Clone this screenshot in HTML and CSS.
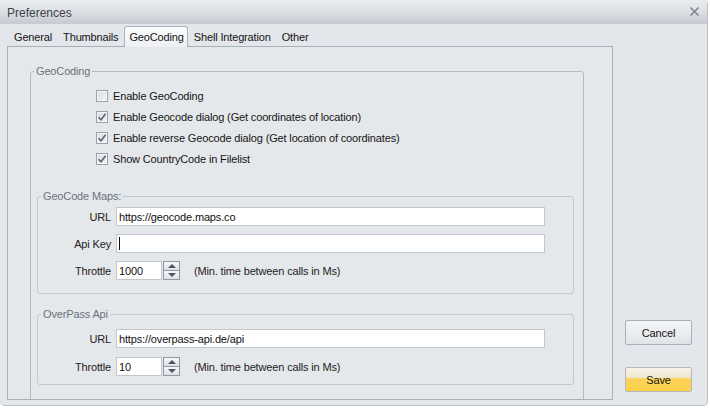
FILE: index.html
```html
<!DOCTYPE html>
<html>
<head>
<meta charset="utf-8">
<title>Preferences</title>
<link rel="stylesheet" href="styles.css">
</head>
<body>
<div class="window">
  <div class="titlebar">
    <span class="title">Preferences</span>
    <svg class="close" width="9" height="9" viewBox="0 0 9 9"><path d="M1 1 L8 8 M8 1 L1 8" stroke="#7c838d" stroke-width="1.5" stroke-linecap="square"/></svg>
  </div>
  <div class="main">
    <div class="tabctl">
      <div class="tabs">
        <span class="tab">General</span>
        <span class="tab">Thumbnails</span>
        <span class="tab active">GeoCoding</span>
        <span class="tab">Shell Integration</span>
        <span class="tab">Other</span>
      </div>
      <div class="panel">
        <fieldset class="group outer">
          <legend>GeoCoding</legend>
          <div class="checks">
            <div class="check"><span class="box"></span><span>Enable GeoCoding</span></div>
            <div class="check"><span class="box on"><svg width="10" height="10" viewBox="0 0 10 10"><path d="M1.5 5.2 L4 7.8 L8.6 1.8" fill="none" stroke="#5d6673" stroke-width="1.6"/></svg></span><span>Enable Geocode dialog (Get coordinates of location)</span></div>
            <div class="check"><span class="box on"><svg width="10" height="10" viewBox="0 0 10 10"><path d="M1.5 5.2 L4 7.8 L8.6 1.8" fill="none" stroke="#5d6673" stroke-width="1.6"/></svg></span><span>Enable reverse Geocode dialog (Get location of coordinates)</span></div>
            <div class="check"><span class="box on"><svg width="10" height="10" viewBox="0 0 10 10"><path d="M1.5 5.2 L4 7.8 L8.6 1.8" fill="none" stroke="#5d6673" stroke-width="1.6"/></svg></span><span>Show CountryCode in Filelist</span></div>
          </div>
          <fieldset class="group sub maps">
            <legend>GeoCode Maps:</legend>
            <div class="form">
              <span class="lbl">URL</span>
              <div class="input">https://geocode.maps.co</div>
              <span class="lbl">Api Key</span>
              <div class="input"><span class="caret"></span></div>
              <span class="lbl">Throttle</span>
              <div class="spinrow">
                <div class="input num">1000</div>
                <div class="spin"><span class="sbtn"><span class="arrow up"></span></span><span class="sbtn"><span class="arrow down"></span></span></div>
                <span class="hint">(Min. time between calls in Ms)</span>
              </div>
            </div>
          </fieldset>
          <fieldset class="group sub overpass">
            <legend>OverPass Api</legend>
            <div class="form loose">
              <span class="lbl">URL</span>
              <div class="input">https://overpass-api.de/api</div>
              <span class="lbl">Throttle</span>
              <div class="spinrow">
                <div class="input num">10</div>
                <div class="spin"><span class="sbtn"><span class="arrow up"></span></span><span class="sbtn"><span class="arrow down"></span></span></div>
                <span class="hint">(Min. time between calls in Ms)</span>
              </div>
            </div>
          </fieldset>
        </fieldset>
      </div>
    </div>
    <div class="buttons">
      <button class="btn">Cancel</button>
      <button class="btn save">Save</button>
    </div>
  </div>
</div>
</body>
</html>
```
FILE: styles.css
```css
html, body {
  margin: 0;
  padding: 0;
  background: #ffffff;
}
body {
  font-family: "Liberation Sans", Arial, sans-serif;
  font-size: 11px;
  letter-spacing: -0.15px;
  color: #151515;
}
.window {
  box-sizing: border-box;
  width: 708px;
  height: 406px;
  background: #e3e6ea;
  border-right: 1px solid #b9bfc7;
  border-bottom: 1px solid #b9bfc7;
  border-radius: 0 4px 5px 5px;
  display: flex;
  flex-direction: column;
}
.titlebar {
  height: 24px;
  flex: none;
  display: flex;
  align-items: center;
  justify-content: space-between;
  padding: 0 8px 0 7px;
  background: linear-gradient(to bottom, #eaecef 0px, #e2e5e9 7px, #d8dce1 14px, #c6cbd2 23px, #c9ced5 24px);
  border-radius: 0 4px 0 0;
}
.title {
  font-size: 12px;
  color: #3d4148;
  letter-spacing: 0;
  padding-top: 1px;
}
.close {
  display: block;
  margin-top: -1px;
}
.main {
  flex: 1;
  display: flex;
}
.tabctl {
  margin-left: 7px;
  margin-top: 2px;
  width: 606px;
  display: flex;
  flex-direction: column;
}
.tabs {
  height: 20px;
  display: flex;
  padding-left: 2px;
  gap: 1px;
  position: relative;
  z-index: 1;
}
.tab {
  padding: 1px 5px 0;
  height: 19px;
  display: flex;
  align-items: center;
  color: #151515;
}
.tab.active {
  height: 20px;
  padding-top: 0;
  margin-bottom: -1px;
  background: linear-gradient(to bottom, #fbfcfd, #eef0f3);
  border: 1px solid #a9b0ba;
  border-bottom: none;
  border-radius: 3px 3px 0 0;
  padding-left: 4px;
  padding-right: 3px;
}
.panel {
  box-sizing: border-box;
  height: 354px;
  border: 1px solid #a8b0ba;
  background: #e5e8eb;
  overflow: hidden;
  padding: 18px 0 0 22px;
}
.group {
  margin: 0;
  padding: 0;
  border: 1px solid #bcc3cc;
  border-radius: 3px;
  box-sizing: border-box;
  min-width: 0;
}
.group legend {
  padding: 0 2px;
  margin-left: 3px;
  line-height: 13px;
  color: #6a727d;
}
.outer {
  width: 554px;
  height: 420px;
  border-color: #b3bac4;
}
.checks {
  margin-top: 7px;
  margin-left: 65px;
  display: flex;
  flex-direction: column;
}
.check {
  height: 21px;
  display: flex;
  align-items: center;
  gap: 5px;
}
.box {
  box-sizing: border-box;
  width: 12px;
  height: 12px;
  border: 1px solid #97a0ab;
  background: linear-gradient(to bottom right, #dadde2, #f1f2f4);
  box-shadow: inset 0 0 0 1px #f7f8f9;
  display: flex;
  align-items: center;
  justify-content: center;
}
.box svg {
  display: block;
}
.sub {
  margin-left: 6px;
  width: 537px;
  border-color: #c3c9d1;
}
.maps {
  margin-top: 21px;
  height: 104px;
  padding-top: 4px;
}
.overpass {
  margin-top: 14px;
  height: 77px;
  padding-top: 8px;
}
.form {
  display: grid;
  grid-template-columns: 73px 429px;
  column-gap: 5px;
  row-gap: 8px;
  align-items: center;
}
.form.loose {
  row-gap: 9px;
}
.lbl {
  text-align: right;
  color: #222;
}
.input {
  box-sizing: border-box;
  height: 19px;
  background: #ffffff;
  border: 1px solid #c1c7cf;
  padding: 0 2px;
  display: flex;
  align-items: center;
  color: #111;
}
.caret {
  width: 1px;
  height: 13px;
  background: #111;
}
.spinrow {
  display: flex;
  align-items: center;
}
.input.num {
  width: 46px;
}
.spin {
  margin-left: 1px;
  width: 17px;
  height: 19px;
  display: flex;
  flex-direction: column;
}
.sbtn {
  box-sizing: border-box;
  flex: 1;
  border: 1px solid #8f98a4;
  background: linear-gradient(to bottom, #f6f7f8, #dde1e6);
  display: flex;
  align-items: center;
  justify-content: center;
}
.sbtn + .sbtn {
  margin-top: -1px;
  flex: 1.1;
}
.arrow {
  width: 0;
  height: 0;
  border-left: 4px solid transparent;
  border-right: 4px solid transparent;
}
.arrow.up {
  border-bottom: 4px solid #4d545e;
}
.arrow.down {
  border-top: 4px solid #4d545e;
}
.hint {
  margin-left: 14px;
  color: #222;
}
.buttons {
  margin-left: 12px;
  width: 67px;
  display: flex;
  flex-direction: column;
  justify-content: flex-end;
  gap: 22px;
  padding-bottom: 13px;
}
.btn {
  box-sizing: border-box;
  width: 67px;
  height: 25px;
  margin: 0;
  padding: 0;
  font-family: "Liberation Sans", Arial, sans-serif;
  font-size: 11px;
  letter-spacing: -0.1px;
  color: #151515;
  border: 1px solid #a9b0ba;
  border-radius: 2px;
  background: linear-gradient(to bottom, #f4f5f7 0%, #eceef1 45%, #dfe3e8 100%);
}
.btn.save {
  border-color: #b7b9b9;
  background: linear-gradient(to bottom, #f6f3ea 0%, #efe7cc 42%, #fdd45a 46%, #fdd04c 100%);
}
```
